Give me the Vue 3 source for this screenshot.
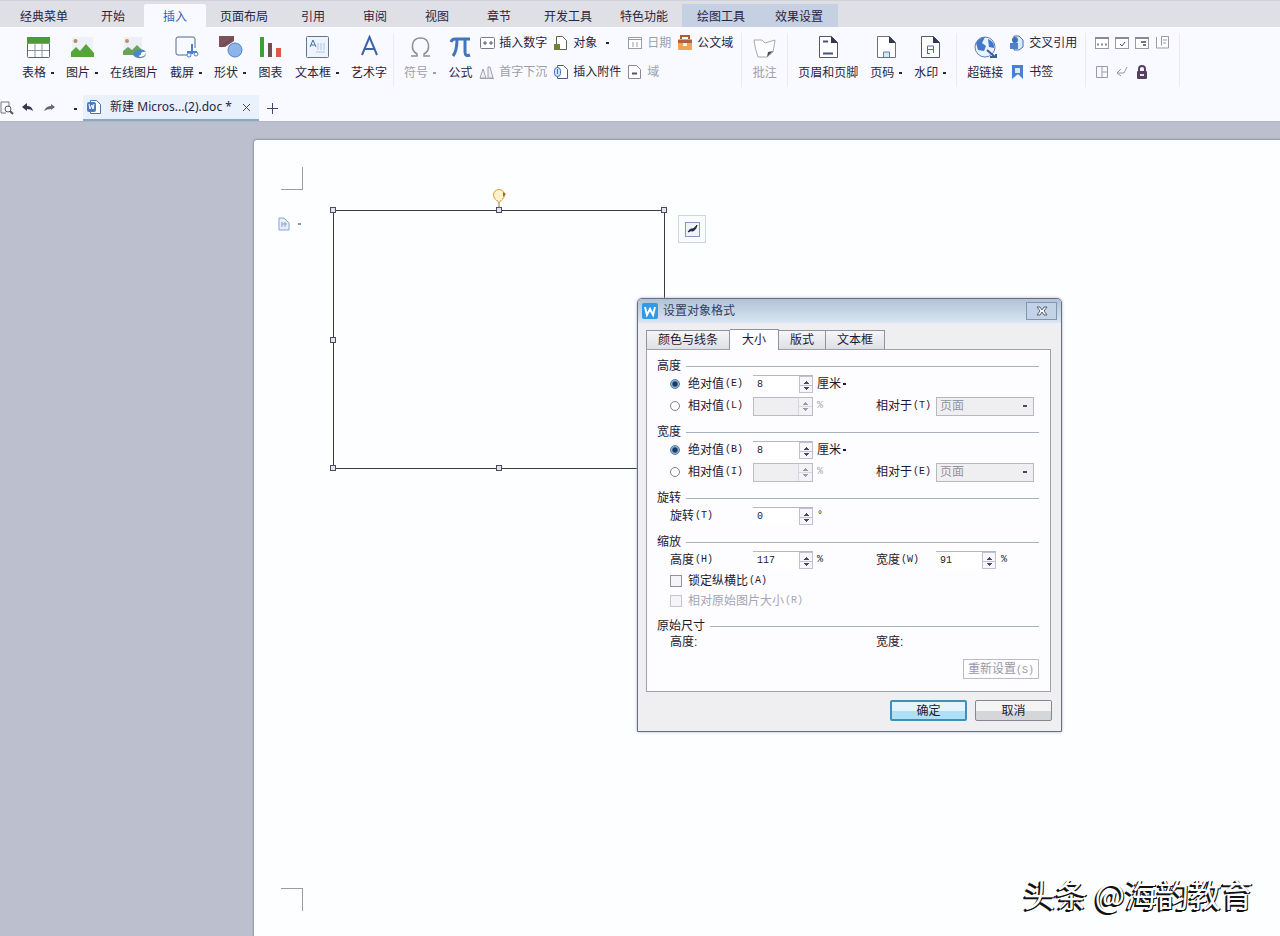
<script setup>
import { ref } from 'vue'

const tabs = ['经典菜单', '开始', '插入', '页面布局', '引用', '审阅', '视图', '章节', '开发工具', '特色功能']
const contextTabs = ['绘图工具', '效果设置']
const activeTab = ref('插入')

const insertTools = [
  { label: '表格', icon: 'table', menu: true },
  { label: '图片', icon: 'picture', menu: true },
  { label: '在线图片', icon: 'online' },
  { label: '截屏', icon: 'capture', menu: true },
  { label: '形状', icon: 'shapes', menu: true },
  { label: '图表', icon: 'chart' },
  { label: '文本框', icon: 'textbox', menu: true },
  { label: '艺术字', icon: 'wordart' }
]
const pageTools = [
  { label: '页眉和页脚', icon: 'header' },
  { label: '页码', icon: 'pageno', menu: true },
  { label: '水印', icon: 'watermark', menu: true }
]
const icons = {
  table: '<rect x="1.500" y="2.500" width="22" height="20" rx="1" fill="#fff" stroke="#5d6470"/><path d="M1 2h23v6H1z" fill="#4c9a3c"/><path d="M1 8.500h23M9 9v13M16 9v13M2 15.500h21" stroke="#8a93a0" fill="none"/>',
  picture: '<path d="M2 2h21v20H2z" fill="#eef1f6"/><circle cx="5.500" cy="6" r="2" fill="#b98a5c"/><path d="M1 22v-5l5-5 4 4 6-7 8 9v4z" fill="#55a43c"/>',
  online: '<path d="M2 2h18v16H2z" fill="#eceff6"/><circle cx="5" cy="6" r="2" fill="#c7905c"/><path d="M1 20v-4l5-4 4 3 5-5 4 4v6z" fill="#67a35a"/><path d="M11 20c1-6 10-8 13-3-4-1-6 1-7 5 3 0 6-1 7-4 0 6-9 7-13 2z" fill="#4d86c9"/>',
  capture: '<path d="M13 20H4q-2 0-2-2V4q0-2 2-2h15q2 0 2 2v9" fill="none" stroke="#56688c"/><path d="M18 9v10M13 17h10" stroke="#4b7fd4" stroke-width="2"/><circle cx="15" cy="20" r="2" fill="none" stroke="#4b7fd4"/><circle cx="22" cy="19" r="2" fill="none" stroke="#4b7fd4"/>',
  shapes: '<path d="M1 1h15v5L7 12H1z" fill="#7d5359"/><path d="M3 12 15 3" stroke="#5c4250"/><circle cx="17" cy="15" r="7" fill="#8fb4ea" stroke="#4c84d3"/>',
  chart: '<path d="M2 2h4v20H2z" fill="#3f9f3a"/><path d="M10 8h4v14h-4z" fill="#73504e"/><path d="M18 13h5v9h-5z" fill="#e0574a"/>',
  textbox: '<rect x="1.500" y="1.500" width="22" height="21" rx="1" fill="#eef4fd" stroke="#64768c"/><path d="m5 12 3-7 3 7M6 10h4" stroke="#456fae" fill="none"/><path d="M13 15V8M16 15V8M19 15V8M11 17h9" stroke="#afc3e2"/>',
  wordart: '<path d="M5 20 12.500 2 20 20M8 14h9" stroke="#3d63ac" stroke-width="2" fill="none"/>',
  omega: '<path d="M3 21h6v-2C2 15 3 3 12.500 3S23 15 16 19v2h6" stroke="#8e8d99" fill="none" stroke-width="1.500"/>',
  pi: '<path d="M3 7q1-3 4-3h15M9 4q0 12-4 17M17 4v13q0 5 5 3" stroke="#4175bd" fill="none" stroke-width="3"/>',
  comment: '<path d="M2 5h8l3 3 10-3-2 12-6 5H6q-3-8-4-17z" fill="#fdfdff" stroke="#a8a7b0"/><path d="m15 22 1-5 5-1z" fill="#4b4a56"/>',
  header: '<path d="M3.500 1.500h12l6 6v15h-18z" fill="#fff" stroke="#52586e"/><path d="M15 1v7h7z" fill="#34384e"/><path d="M7 6.500h5M7 18.500h10" stroke="#465479" stroke-width="2"/>',
  pageno: '<path d="M3.500 1.500h12l6 6v15h-18z" fill="#fff" stroke="#6c7286"/><path d="M15 1v7h7z" fill="#34384e"/><path d="M9.500 22v-5h6v5" stroke="#4d80cf" fill="#dae7fa"/>',
  watermark: '<path d="M3.500 1.500h12l6 6v15h-18z" fill="#fff" stroke="#52586e"/><path d="M15 1v7h7z" fill="#34384e"/><path d="M9.500 18v-7h6v7M9 14.500h6M9 18.500h3" stroke="#4d6bb1" fill="none"/>',
  link: '<circle cx="12" cy="12" r="10" fill="#eaf2ff" stroke="#5b83bf"/><path d="M3 8q4-6 9-6l-3 6 4 3-2 5-6-1zM15 4q7 3 6 9l-5-1z" fill="#4478c4"/><path d="m14 15 8 7M17 22h6v-3" stroke="#3c5f99" stroke-width="2" fill="none"/>'
}
const smallIcons = {
  number: '<rect x="1.500" y="2.500" width="14" height="11" rx="1" fill="#fff" stroke="#77798a"/><path d="M4 8h4M6 6v4M10 8h4M12 6v4" stroke="#55576a"/>',
  dropcap: '<path d="m1 14 3-9 3 9zM9 14V3h2l3 11z" fill="#f0f0f4" stroke="#a2a0aa"/><path d="M1 14.500h14" stroke="#a2a0aa"/>',
  object: '<path d="M3.500 1.500h6l4 4v9h-10z" fill="#fff" stroke="#596247"/><path d="M1 9h6v6H1z" fill="#6d8430"/>',
  attach: '<path d="M4.500 1.500h6l4 4v9h-10z" fill="#fff" stroke="#4c5e84"/><rect x="1.500" y="3.500" width="6" height="9" rx="3" fill="#cfe0fb" stroke="#4371bd"/><path d="M4.500 5v5" stroke="#4371bd"/>',
  date: '<rect x="1.500" y="2.500" width="13" height="11" fill="#fff" stroke="#9c9aa7"/><path d="M1 4.500h14M6 7v5M10 7v5" stroke="#9c9aa7"/>',
  field: '<path d="M1.500 1.500h8l4 4v9h-12z" fill="#fff" stroke="#8b8997"/><path d="M5 9.500h5" stroke="#55536a" stroke-width="2"/>',
  docfield: '<path d="M4 4V1h8v3" stroke="#a85e3a" fill="none" stroke-width="2"/><rect x="1" y="4" width="14" height="11" rx="1" fill="#f0a257"/><path d="M1 5h14v3H1z" fill="#a96342"/><path d="M6 8h4v3H6z" fill="#fff1de"/>',
  cross: '<path d="M5 1h5l4 4v7l-4 3H5z" fill="#dce9fb" stroke="#436cae"/><circle cx="6" cy="5" r="3" fill="#3e6fbd"/><path d="M1 8h8v6H1z" fill="#4f80cf"/>',
  bookmark: '<path d="M3 1h11v14l-5-5-6 5z" fill="#4b7fcf"/><path d="M6 4h5v5H6z" fill="#d9e7fb"/>',
  form1: '<rect x="1.500" y="2.500" width="13" height="11" fill="#fff" stroke="#9b99a4"/><path d="M1 3h14M3 9.500h2M7 9.500h2M11 9.500h2" stroke="#8b8994" stroke-width="2"/>',
  form2: '<rect x="1.500" y="2.500" width="13" height="11" fill="#fff" stroke="#9b99a4"/><path d="M1 3h14" stroke="#8b8994" stroke-width="2"/><path d="m6 9 2 2 3-4" stroke="#55536a" fill="none"/>',
  form3: '<rect x="1.500" y="2.500" width="13" height="11" fill="#fff" stroke="#9b99a4"/><path d="M1 3h14" stroke="#8b8994" stroke-width="2"/><path d="M7 7h5M9 10h3" stroke="#77758a" stroke-width="2"/>',
  form4: '<path d="M2.500 2v11h12V1.500h-7v9" fill="#fff" stroke="#9b99a4"/><path d="M9 5h4M9 8h3" stroke="#9b99a4"/>',
  grid: '<path d="M2.500 2.500h11v11h-11zM8 2v11M8 8h5" fill="none" stroke="#9b99a4"/>',
  back: '<path d="m7 5-4 4 4 3M3 9h7l3-6" fill="none" stroke="#9b99a4"/>',
  lock: '<path d="M5 8V5q0-3 3-3t3 3v3" fill="none" stroke="#55405f" stroke-width="2"/><rect x="3" y="7" width="10" height="8" rx="1" fill="#55405f"/><path d="M6 10h4v2H6z" fill="#e9e3f0"/>'
}
const smallColumns = [
  [{ label: '插入数字', icon: 'number' }, { label: '首字下沉', icon: 'dropcap', off: true }],
  [{ label: '对象', icon: 'object', menu: true }, { label: '插入附件', icon: 'attach' }],
  [{ label: '日期', icon: 'date', off: true }, { label: '域', icon: 'field', off: true }],
  [{ label: '公文域', icon: 'docfield' }]
]
const formRows = [['form1', 'form2', 'form3', 'form4'], ['grid', 'back', 'lock']]

const dialogTabs = ['颜色与线条', '大小', '版式', '文本框']
const dialogTab = ref('大小')
const sizes = ref([
  { id: 'h', title: '高度', abs: '绝对值', absKey: '(E)', rel: '相对值', relKey: '(L)', toKey: '(T)', value: '8', mode: 'abs' },
  { id: 'w', title: '宽度', abs: '绝对值', absKey: '(B)', rel: '相对值', relKey: '(I)', toKey: '(E)', value: '8', mode: 'abs' }
])
const rotation = ref('0')
const scaleH = ref('117')
const scaleW = ref('91')
const handles = ['nw', 'n', 'ne', 'w', 'e', 'sw', 's']
</script>

<template>
  <div class="app">
    <nav class="tabbar">
      <button v-for="t in tabs" :key="t" class="tab" :class="{ active: t === activeTab }" @click="activeTab = t">{{ t }}</button>
      <button v-for="t in contextTabs" :key="t" class="tab context">{{ t }}</button>
    </nav>

    <div class="ribbon">
      <div class="group first">
        <button v-for="t in insertTools" :key="t.label" class="tool">
          <svg width="25" height="25" viewBox="0 0 25 25" v-html="icons[t.icon]"></svg>
          <span class="cap">{{ t.label }}<i v-if="t.menu" class="dot"></i></span>
        </button>
      </div>
      <div class="group">
        <button class="tool off">
          <svg width="25" height="25" viewBox="0 0 25 25" v-html="icons.omega"></svg>
          <span class="cap">符号<i class="dot"></i></span>
        </button>
        <button class="tool">
          <svg width="25" height="25" viewBox="0 0 25 25" v-html="icons.pi"></svg>
          <span class="cap">公式</span>
        </button>
        <div class="columns">
          <div v-for="(c, i) in smallColumns" :key="i" class="column">
            <button v-for="s in c" :key="s.label" class="small" :class="{ off: s.off }">
              <svg width="16" height="16" viewBox="0 0 16 16" v-html="smallIcons[s.icon]"></svg>{{ s.label }}<i v-if="s.menu" class="dot"></i>
            </button>
          </div>
        </div>
      </div>
      <div class="group">
        <button class="tool off">
          <svg width="25" height="25" viewBox="0 0 25 25" v-html="icons.comment"></svg>
          <span class="cap">批注</span>
        </button>
      </div>
      <div class="group">
        <button v-for="t in pageTools" :key="t.label" class="tool">
          <svg width="25" height="25" viewBox="0 0 25 25" v-html="icons[t.icon]"></svg>
          <span class="cap">{{ t.label }}<i v-if="t.menu" class="dot"></i></span>
        </button>
      </div>
      <div class="group">
        <button class="tool">
          <svg width="25" height="25" viewBox="0 0 25 25" v-html="icons.link"></svg>
          <span class="cap">超链接</span>
        </button>
        <div class="columns">
          <div class="column">
            <button class="small"><svg width="16" height="16" viewBox="0 0 16 16" v-html="smallIcons.cross"></svg>交叉引用</button>
            <button class="small"><svg width="16" height="16" viewBox="0 0 16 16" v-html="smallIcons.bookmark"></svg>书签</button>
          </div>
        </div>
      </div>
      <div class="group">
        <div class="column forms">
          <div v-for="(r, i) in formRows" :key="i" class="formrow">
            <button v-for="f in r" :key="f" class="small" :aria-label="f">
              <svg width="16" height="16" viewBox="0 0 16 16" v-html="smallIcons[f]"></svg>
            </button>
          </div>
        </div>
      </div>
    </div>

    <div class="docbar">
      <button class="quick" aria-label="打印预览">
        <svg width="14" height="14" viewBox="0 0 14 14"><path d="M1 1h8v5M1 1v11h5" fill="none" stroke="#777586" /><circle cx="8" cy="8" r="3" fill="none" stroke="#55536a" /><path d="m10 10 3 3" stroke="#55536a" stroke-width="2" /></svg>
      </button>
      <button class="quick" aria-label="撤销">
        <svg width="14" height="14" viewBox="0 0 14 14"><path d="m1 6 5-4v3q5 0 6 5-2-2-6-2v2z" fill="#3a3350" /></svg>
      </button>
      <button class="quick" aria-label="恢复">
        <svg width="14" height="14" viewBox="0 0 14 14"><path d="M13 6 9 3v2q-5 0-7 5 3-2 7-2v1z" fill="#6b6678" /></svg>
      </button>
      <button class="quick more" aria-label="更多"><i class="dot"></i></button>
      <div class="doctab">
        <svg width="16" height="16" viewBox="0 0 16 16"><path d="M4.500 1.500h6l4 4v9h-10z" fill="#fff" stroke="#5272a8" /><rect x="1" y="3" width="9" height="10" rx="2" fill="#4f79c1" /><path d="m3 5 1 5 2-4 1 4 1-5" fill="none" stroke="#fff" /></svg>
        <span>新建 <span class="latin">Micros...(2).doc *</span></span>
        <button class="x" aria-label="关闭"><svg width="9" height="9" viewBox="0 0 9 9"><path d="m1 1 7 7M8 1 1 8" stroke="#4a4560" /></svg></button>
      </div>
      <button class="plus" aria-label="新建"><svg width="11" height="11" viewBox="0 0 11 11"><path d="M5.500 0v11M0 5.500h11" stroke="#4a4560" /></svg></button>
    </div>

    <main class="workspace">
      <section class="page">
        <i class="crop top"></i>
        <i class="crop bottom"></i>
        <button class="paste" aria-label="页面选项">
          <svg width="12" height="14" viewBox="0 0 12 14"><path d="M1 1h5l5 5v7H1z" fill="#e6effc" stroke="#8aa2cf" /><path d="M4 5v5M4 7h5M7 5v5" stroke="#8aa2cf" /></svg>
          <i class="dot"></i>
        </button>
        <div class="shape">
          <i v-for="h in handles" :key="h" class="handle" :class="h"></i>
          <svg class="rotate" width="16" height="24" viewBox="0 0 16 24"><path d="M8 15v6" stroke="#8a7368" /><circle cx="8" cy="8" r="5.500" fill="#fff2cb" stroke="#d99c3e" /><path d="m5 12 3 4 3-4z" fill="#fff2cb" stroke="#d99c3e" /><path d="M5 12h6" stroke="#fff2cb" stroke-width="2" /><path d="m12 5 3 2-3 3z" fill="#a8642c" /></svg>
        </div>
        <button class="layout" aria-label="布局选项">
          <svg width="17" height="17" viewBox="0 0 17 17"><rect x="1.500" y="1.500" width="14" height="14" fill="#eef3fc" stroke="#8696bd" /><path d="M4 11q2-4 5-3 2-1 4-4-1 5-4 6-2-1-5 1z" fill="#22243a" stroke="#22243a" /></svg>
        </button>

        <form class="dialog" role="dialog" aria-labelledby="dlg-title" @submit.prevent>
          <header class="titlebar">
            <svg width="16" height="16" viewBox="0 0 16 16"><rect width="16" height="16" rx="2" fill="#2f9ae8" /><path d="m3 4 2 8 3-6 3 6 2-8" fill="none" stroke="#fff" stroke-width="2" /></svg>
            <h1 id="dlg-title">设置对象格式</h1>
            <button type="button" class="close" aria-label="关闭"><svg width="12" height="10" viewBox="0 0 12 10"><path d="M1 1h3l2 3 2-3h3L8 5l3 4H8L6 6 4 9H1l3-4z" fill="#fff" stroke="#53607a" /></svg></button>
          </header>
          <div class="dlgtabs">
            <button v-for="t in dialogTabs" :key="t" type="button" class="dlgtab" :class="{ on: t === dialogTab }" @click="dialogTab = t">{{ t }}</button>
          </div>
          <div class="panel">
            <section v-for="s in sizes" :key="s.id" class="sect">
              <h2>{{ s.title }}</h2>
              <div class="row">
                <label><input v-model="s.mode" type="radio" value="abs" :name="s.id">{{ s.abs }}<span class="key">{{ s.absKey }}</span></label>
                <div class="spin"><input v-model="s.value" :aria-label="s.title"><button type="button" aria-label="调整"></button></div>
                <span class="unit">厘米<i class="dot"></i></span>
              </div>
              <div class="row">
                <label><input v-model="s.mode" type="radio" value="rel" :name="s.id">{{ s.rel }}<span class="key">{{ s.relKey }}</span></label>
                <div class="spin dis"><input disabled :aria-label="s.rel"><button type="button" disabled aria-label="调整"></button></div>
                <span class="unit key faint">%</span>
                <label :for="'to-' + s.id">相对于<span class="key">{{ s.toKey }}</span></label>
                <div class="pick"><select :id="'to-' + s.id" disabled><option>页面</option></select></div>
              </div>
            </section>
            <section class="sect">
              <h2>旋转</h2>
              <div class="row">
                <label for="rot">旋转<span class="key">(T)</span></label>
                <div class="spin"><input id="rot" v-model="rotation"><button type="button" aria-label="调整"></button></div>
                <span class="unit key">°</span>
              </div>
            </section>
            <section class="sect">
              <h2>缩放</h2>
              <div class="row">
                <label for="sh">高度<span class="key">(H)</span></label>
                <div class="spin"><input id="sh" v-model="scaleH"><button type="button" aria-label="调整"></button></div>
                <span class="unit key">%</span>
                <label for="sw">宽度<span class="key">(W)</span></label>
                <div class="pair"><div class="spin"><input id="sw" v-model="scaleW"><button type="button" aria-label="调整"></button></div><span class="key">%</span></div>
              </div>
              <label class="check"><input type="checkbox">锁定纵横比<span class="key">(A)</span></label>
              <label class="check faint"><input type="checkbox" disabled>相对原始图片大小<span class="key">(R)</span></label>
            </section>
            <section class="sect">
              <h2>原始尺寸</h2>
              <div class="row orig"><span>高度:</span><span class="second">宽度:</span></div>
            </section>
            <button type="button" class="reset" disabled>重新设置<span class="key">(S)</span></button>
          </div>
          <footer class="actions">
            <button class="btn primary">确定</button>
            <button type="button" class="btn">取消</button>
          </footer>
        </form>

        <p class="signature">头条 @海韵教育</p>
      </section>
    </main>
  </div>
</template>

<style>
body { margin: 0; }
</style>

<style scoped>
.app {
  display: flex;
  flex-direction: column;
  min-height: 100vh;
  overflow: hidden;
  background: #f9faff;
  color: #2b2340;
  font: 12px/16px "Liberation Sans", "Noto Sans CJK SC", sans-serif;
}
* { box-sizing: border-box; }
button, input, select { font: inherit; color: inherit; margin: 0; padding: 0; border: 0; background: none; }
h1, h2, p { margin: 0; font: inherit; }
svg { display: block; flex: none; }
.dot { display: inline-block; flex: none; width: 3px; height: 2px; background: currentColor; }

.tabbar {
  display: flex;
  height: 27px;
  padding: 3px 0 0 6px;
  background: #dfe0e5;
  border-top: 1px solid #cfd2d8;
  white-space: nowrap;
}
.tab { min-width: 62px; padding: 2px 14px 0; }
.tab.active { background: #f9faff; color: #2f62bb; border-radius: 2px 2px 0 0; }
.tab.context { padding: 2px 15px 0; background: #c5d0e2; }

.ribbon { display: flex; height: 68px; padding: 6px 0 0 12px; white-space: nowrap; }
.group { display: flex; height: 54px; padding: 0 4px; border-right: 1px solid #e9ebf2; }
.group.first { padding-right: 0; }
.tool { display: flex; flex-direction: column; align-items: center; gap: 7px; height: 50px; padding: 2px 6px 0; }
.cap { display: flex; align-items: center; line-height: 12px; }
.cap .dot, .small .dot { margin-left: 5px; }
.off { color: #a09dab; }
.columns { display: flex; gap: 6px; padding-right: 4px; }
.column { display: flex; flex-direction: column; gap: 13px; padding-top: 2px; }
.small { display: flex; align-items: center; gap: 4px; height: 16px; }
.forms { padding: 2px 5px 0 4px; }
.formrow { display: flex; gap: 4px; }

.docbar { display: flex; align-items: center; height: 27px; border-bottom: 1px solid #aeb7c8; white-space: nowrap; }
.quick { width: 21px; padding-right: 6px; }
.quick.more { width: 20px; padding: 0 0 4px 4px; }
.doctab {
  display: flex;
  align-items: center;
  gap: 8px;
  height: 26px;
  margin-right: 8px;
  padding: 0 6px 0 3px;
  background: #e9f2fc;
  border-bottom: 2px solid #8aa6c9;
}
.latin { font-family: "Noto Sans", sans-serif; }
.x { padding: 2px; }
.plus { height: 16px; }

.workspace { display: flex; flex: 1; padding: 18px 0 0 254px; background: #bcc0ce; }
.page { position: relative; flex: 1; min-height: 796px; background: #fdfeff; border-radius: 3px 0 0; box-shadow: 0 0 2px 1px #8f97a8; }
.crop { position: absolute; left: 27px; width: 22px; height: 23px; border-right: 1px solid #9b9ba2; }
.crop.top { top: 27px; border-bottom: 1px solid #9b9ba2; }
.crop.bottom { top: 748px; border-top: 1px solid #9b9ba2; }
.paste { position: absolute; left: 24px; top: 77px; display: flex; align-items: center; gap: 8px; color: #8795b5; }
.shape { position: absolute; left: 79px; top: 70px; width: 332px; height: 259px; border: 1px solid #3d374a; }
.handle { position: absolute; width: 6px; height: 6px; background: #e4e2ee; border: 1px solid #4f495c; }
.nw, .n, .ne { top: -4px; }
.sw, .s { bottom: -3px; }
.w, .e { top: 126px; }
.nw, .w, .sw { left: -4px; }
.ne, .e { right: -3px; }
.n, .s { left: 162px; }
.rotate { position: absolute; left: 157px; top: -24px; }
.layout { position: absolute; left: 424px; top: 75px; width: 28px; height: 28px; padding: 5px; background: #fbfcff; border: 1px solid #cdd4dd; }

.dialog {
  position: absolute;
  left: 383px;
  top: 158px;
  width: 425px;
  padding: 0 10px 10px 8px;
  background: #efeff2;
  border: 1px solid #667084;
  border-radius: 5px 5px 0 0;
  box-shadow: 0 0 3px #aab0bc;
  color: #1f1730;
}
.titlebar {
  display: flex;
  align-items: center;
  gap: 5px;
  height: 24px;
  margin: 0 -10px 0 -8px;
  padding: 0 4px;
  background: linear-gradient(#b2c2d6, #d9e6f3);
  border-radius: 4px 4px 0 0;
}
.titlebar h1 { flex: 1; color: #32405c; }
.close { display: flex; align-items: center; justify-content: center; width: 31px; height: 18px; background: #c3d2e6; border: 1px solid #8495b0; }
.dlgtabs { display: flex; align-items: flex-end; height: 26px; padding-top: 6px; }
.dlgtab { height: 19px; padding: 0 11px; background: linear-gradient(#f6f6f8, #dedfe4); border: 1px solid #8e93a0; border-bottom: 0; line-height: 16px; }
.dlgtab + .dlgtab { border-left: 0; }
.dlgtab.on { position: relative; height: 21px; margin-bottom: -1px; padding: 0 12px 1px; background: #fdfdff; }
.panel { display: flow-root; padding: 9px 11px 12px 10px; background: #fdfdff; border: 1px solid #9ca3ae; }
.sect { margin-bottom: 8px; }
.sect h2 { display: flex; align-items: center; gap: 5px; height: 14px; }
.sect h2::after { content: ""; flex: 1; height: 1px; background: #a9b1bc; }
.row { display: grid; grid-template-columns: 83px 64px 59px 60px 1fr; align-items: center; height: 22px; padding: 0 5px 0 13px; }
.row label, .check { display: flex; align-items: center; white-space: nowrap; }
.key { font: 10px/14px "Liberation Mono", monospace; }
label .key { margin-left: 1px; }
.unit { display: flex; align-items: center; gap: 2px; }
.faint { color: #a6a4b0; }
input[type="radio"] { appearance: none; width: 10px; height: 10px; margin-right: 8px; border: 1px solid #7d8190; border-radius: 50%; background: #fff; }
input[type="radio"]:checked { border-color: #5f7c9b; background: radial-gradient(#173a66 35%, #8db4d8 60%); }
.spin { display: flex; width: 60px; height: 18px; border-top: 1px solid #b4b8c2; background: #fff; }
.spin input { flex: 1; min-width: 0; padding: 0 4px; font: 10px/16px "Liberation Mono", monospace; }
.spin button {
  width: 14px;
  border: 1px solid #c3bed2;
  background:
    conic-gradient(from 135deg at 50% 0, #4c4663 90deg, transparent 0) 50% 4px / 5px 3px no-repeat,
    conic-gradient(from -45deg at 50% 100%, #4c4663 90deg, transparent 0) 50% 10px / 5px 3px no-repeat,
    linear-gradient(#c3bed2, #c3bed2) 0 8px / 100% 1px no-repeat,
    #f7f6fb;
}
.spin.dis { height: 19px; background: #efeff2; border: 1px solid #b9bcc4; }
.spin.dis button { opacity: .5; border-width: 0 0 0 1px; }
.pick { position: relative; display: flex; }
.pick select { appearance: none; flex: 1; height: 19px; padding: 0 3px; border: 1px solid #b5b9c1; background: #efeff2; color: #9593a0; opacity: 1; line-height: 16px; }
.pick::after { content: ""; position: absolute; right: 7px; top: 8px; width: 4px; height: 2px; background: #4c4663; }
.pair { display: flex; align-items: center; gap: 5px; }
.check { height: 20px; padding-left: 13px; }
.check input { appearance: none; width: 12px; height: 12px; margin-right: 6px; border: 1px solid #8f91a0; background: #f5f5f9; }
.check.faint input { border-color: #c3c4cc; }
.orig { height: 18px; }
.second { grid-column: 4; }
.reset { display: block; width: 76px; height: 20px; margin-left: auto; border: 1px solid #b9bcc4; color: #9a98a6; white-space: nowrap; line-height: 16px; }
.actions { display: flex; justify-content: flex-end; gap: 8px; margin: 8px -1px 0 0; }
.btn { width: 77px; height: 21px; border: 1px solid #85878f; border-radius: 2px; background: linear-gradient(#f4f4f5 50%, #d5d6da 50%); line-height: 16px; }
.btn.primary { border: 2px solid #3f8fb8; background: linear-gradient(#e4f4fd 50%, #b0dff8 50%); }

.signature {
  position: absolute;
  right: 27px;
  bottom: 22px;
  color: #fff;
  font-family: "Noto Sans CJK SC", sans-serif;
  font-size: 32px;
  line-height: 42px;
  text-shadow: 1px 1px 0 #111, -1px 1px 0 #111, -2px 2px 0 #111;
}
</style>
